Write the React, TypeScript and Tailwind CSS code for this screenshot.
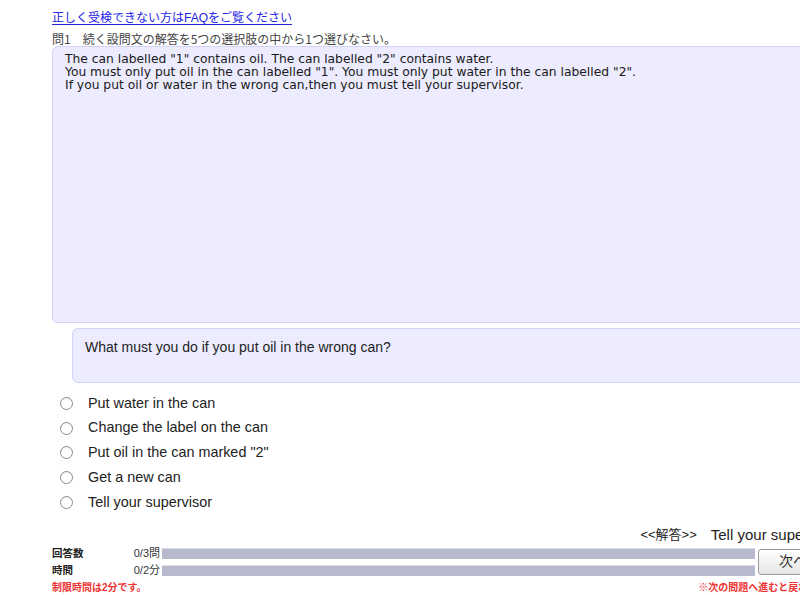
import React from 'react';

const options = [
  'Put water in the can',
  'Change the label on the can',
  'Put oil in the can marked "2"',
  'Get a new can',
  'Tell your supervisor',
];

const Radio = () => (
  <span className="inline-block w-[13px] h-[13px] rounded-full border border-[#8c8c8c] bg-white shadow-[inset_0_1px_1px_rgba(0,0,0,0.08)]" />
);

const ProgressRow = ({ label, value }: { label: string; value: string }) => (
  <div className="flex items-center h-[17px]">
    <div className="w-[60px] text-[10.5px] font-bold text-[#222]">{label}</div>
    <div className="w-[48px] text-right text-[11px] text-[#333]">{value}</div>
    <div className="ml-[2px] w-[593px] h-[11px] bg-[#b7b9cd] border-t border-[#dcdde6]" />
  </div>
);

export default function App() {
  return (
    <div className="w-[800px] h-[595px] overflow-hidden bg-white font-[family-name:'Liberation_Sans','Noto_Sans_CJK_JP',sans-serif]">
      <div className="w-[900px] pl-[52px]">
        <div className="w-[796px]">
          <div className="pt-[10px] h-[31px] text-[12px] leading-[16px]">
            <a href="#" className="text-[#2323e6] underline underline-offset-2">
              正しく受検できない方はFAQをご覧ください
            </a>
          </div>
          <div className="h-[15px] text-[12px] leading-[16px] text-[#444] font-[family-name:'Noto_Sans_CJK_JP',sans-serif]">
            問1　続く設問文の解答を5つの選択肢の中から1つ選びなさい。
          </div>

          <div className="h-[277px] rounded-[6px] border-[1.5px] border-[#d2d2f7] bg-[#ececfe] pl-[12px] pt-[6px] text-[12.3px] leading-[13px] text-[#1a1a1a] font-[family-name:'DejaVu_Sans',sans-serif]">
            <p>The can labelled "1" contains oil. The can labelled "2" contains water.</p>
            <p>You must only put oil in the can labelled "1". You must only put water in the can labelled "2".</p>
            <p>If you put oil or water in the wrong can,then you must tell your supervisor.</p>
          </div>

          <div className="ml-[20px] mt-[5px] h-[55px] rounded-[6px] border-[1.5px] border-[#d2d2f7] bg-[#ececfe] pl-[12px] pt-[10px] text-[14px] leading-[16px] text-[#1e1e1e]">
            What must you do if you put oil in the wrong can?
          </div>

          <div className="mt-[8px] flex flex-col">
            {options.map((o) => (
              <label key={o} className="flex items-center h-[24.8px] text-[14.4px] text-[#222]">
                <span className="w-[8px]" />
                <Radio />
                <span className="ml-[15px]">{o}</span>
              </label>
            ))}
          </div>

          <div className="mt-[10px] h-[20px] flex justify-end items-center pr-[8px] text-[#222]">
            <span className="text-[13px]">&lt;&lt;解答&gt;&gt;</span>
            <span className="ml-[14px] text-[15px]">Tell your supervisor</span>
          </div>

          <div className="flex items-center">
            <div className="flex flex-col">
              <ProgressRow label="回答数" value="0/3問" />
              <ProgressRow label="時間" value="0/2分" />
            </div>
            <button className="ml-[3px] h-[26px] w-[70px] rounded-[3px] border border-[#9a9a9a] bg-gradient-to-b from-white to-[#e6e6e6] text-[14px] text-[#222]">
              次へ
            </button>
          </div>

          <div className="mt-[2px] flex justify-between text-[10px] font-bold text-[#ee3333] leading-[14px]">
            <span>制限時間は2分です。</span>
            <span>※次の問題へ進むと戻れません。</span>
          </div>
        </div>
      </div>
    </div>
  );
}
